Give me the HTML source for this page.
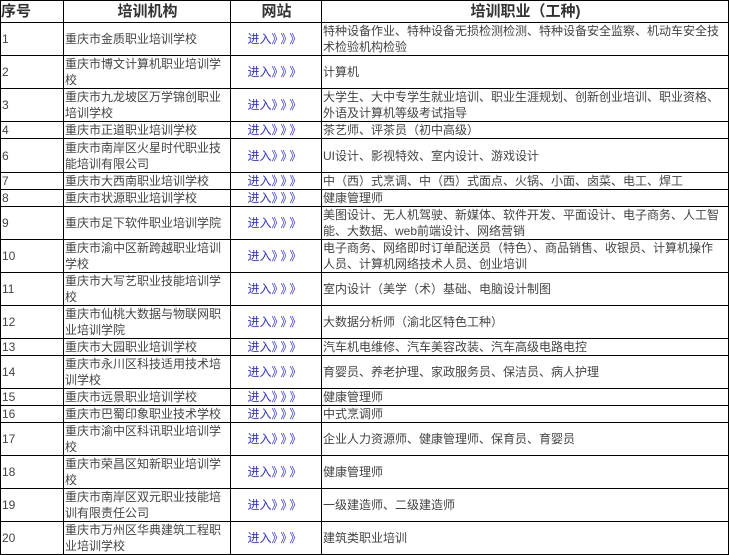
<!DOCTYPE html>
<html><head><meta charset="utf-8"><style>
html,body{margin:0;padding:0;background:#fff;}
table{border-collapse:collapse;table-layout:fixed;width:728px;font-family:"Liberation Sans","Noto Sans CJK SC",sans-serif;font-size:12px;color:#444;}
td,th{border:1px solid #000;padding:0 0 0 1px;line-height:16px;white-space:nowrap;overflow:hidden;vertical-align:middle;}
th{font-size:15px;font-weight:bold;color:#333;text-align:center;}
td.l{text-align:center;color:#3333cc;padding:0;}
td.l span{letter-spacing:3px;}
</style></head><body>
<table>
<colgroup><col style="width:63px"><col style="width:167px"><col style="width:91px"><col style="width:407px"></colgroup>
<tr style="height:22px"><th style="text-align:left;padding-left:0">序号</th><th>培训机构</th><th>网站</th><th>培训职业（工种)</th></tr>
<tr style="height:33px"><td>1</td><td>重庆市金质职业培训学校</td><td class="l">进入<span>》》》</span></td><td>特种设备作业、特种设备无损检测检测、特种设备安全监察、机动车安全技<br>术检验机构检验</td></tr>
<tr style="height:33px"><td>2</td><td>重庆市博文计算机职业培训学<br>校</td><td class="l">进入<span>》》》</span></td><td>计算机</td></tr>
<tr style="height:33px"><td>3</td><td>重庆市九龙坡区万学锦创职业<br>培训学校</td><td class="l">进入<span>》》》</span></td><td>大学生、大中专学生就业培训、职业生涯规划、创新创业培训、职业资格、<br>外语及计算机等级考试指导</td></tr>
<tr style="height:17px"><td>4</td><td>重庆市正道职业培训学校</td><td class="l">进入<span>》》》</span></td><td>茶艺师、评茶员（初中高级）</td></tr>
<tr style="height:34px"><td>6</td><td>重庆市南岸区火星时代职业技<br>能培训有限公司</td><td class="l">进入<span>》》》</span></td><td>UI设计、影视特效、室内设计、游戏设计</td></tr>
<tr style="height:16px"><td>7</td><td>重庆市大西南职业培训学校</td><td class="l">进入<span>》》》</span></td><td>中（西）式烹调、中（西）式面点、火锅、小面、卤菜、电工、焊工</td></tr>
<tr style="height:17px"><td>8</td><td>重庆市状源职业培训学校</td><td class="l">进入<span>》》》</span></td><td>健康管理师</td></tr>
<tr style="height:32px"><td>9</td><td>重庆市足下软件职业培训学院</td><td class="l">进入<span>》》》</span></td><td>美图设计、无人机驾驶、新媒体、软件开发、平面设计、电子商务、人工智<br>能、大数据、web前端设计、网络营销</td></tr>
<tr style="height:33px"><td>10</td><td>重庆市渝中区新跨越职业培训<br>学校</td><td class="l">进入<span>》》》</span></td><td>电子商务、网络即时订单配送员（特色）、商品销售、收银员、计算机操作<br>人员、计算机网络技术人员、创业培训</td></tr>
<tr style="height:33px"><td>11</td><td>重庆市大写艺职业技能培训学<br>校</td><td class="l">进入<span>》》》</span></td><td>室内设计（美学（术）基础、电脑设计制图</td></tr>
<tr style="height:33px"><td>12</td><td>重庆市仙桃大数据与物联网职<br>业培训学院</td><td class="l">进入<span>》》》</span></td><td>大数据分析师（渝北区特色工种）</td></tr>
<tr style="height:17px"><td>13</td><td>重庆市大园职业培训学校</td><td class="l">进入<span>》》》</span></td><td>汽车机电维修、汽车美容改装、汽车高级电路电控</td></tr>
<tr style="height:31px"><td>14</td><td>重庆市永川区科技适用技术培<br>训学校</td><td class="l">进入<span>》》》</span></td><td>育婴员、养老护理、家政服务员、保洁员、病人护理</td></tr>
<tr style="height:17px"><td>15</td><td>重庆市远景职业培训学校</td><td class="l">进入<span>》》》</span></td><td>健康管理师</td></tr>
<tr style="height:17px"><td>16</td><td>重庆市巴蜀印象职业技术学校</td><td class="l">进入<span>》》》</span></td><td>中式烹调师</td></tr>
<tr style="height:33px"><td>17</td><td>重庆市渝中区科讯职业培训学<br>校</td><td class="l">进入<span>》》》</span></td><td>企业人力资源师、健康管理师、保育员、育婴员</td></tr>
<tr style="height:33px"><td>18</td><td>重庆市荣昌区知新职业培训学<br>校</td><td class="l">进入<span>》》》</span></td><td>健康管理师</td></tr>
<tr style="height:33px"><td>19</td><td>重庆市南岸区双元职业技能培<br>训有限责任公司</td><td class="l">进入<span>》》》</span></td><td>一级建造师、二级建造师</td></tr>
<tr style="height:32px"><td>20</td><td>重庆市万州区华典建筑工程职<br>业培训学校</td><td class="l">进入<span>》》》</span></td><td>建筑类职业培训</td></tr>
</table>
</body></html>
